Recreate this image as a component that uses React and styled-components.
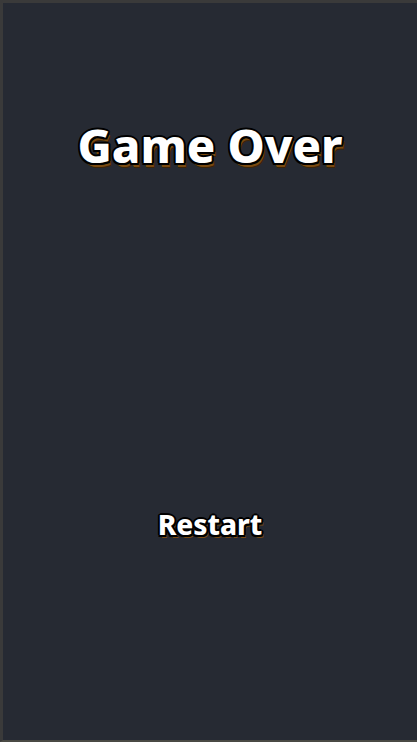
import React from 'react';
import styled, { createGlobalStyle } from 'styled-components';

const GlobalStyle = createGlobalStyle`
  html, body {
    margin: 0;
    padding: 0;
    background: #262a33;
    overflow: hidden;
  }
`;

const Screen = styled.div`
  box-sizing: border-box;
  width: 100%;
  height: 742px;
  background: #262a33;
  border-left: 3px solid #3a3a3a;
  border-top: 3px solid #3a3a3a;
  border-bottom: 2px solid #4a4a44;
  display: flex;
  flex-direction: column;
  align-items: center;
  font-family: 'Noto Sans', 'DejaVu Sans', sans-serif;
  color: #fff;
`;

const outline = `
  -1.5px -1.5px 0 #000, 1.5px -1.5px 0 #000, -1.5px 1.5px 0 #000, 1.5px 1.5px 0 #000,
  0 -2px 0 #000, 0 2px 0 #000, -2px 0 0 #000, 2px 0 0 #000
`;

const Title = styled.h1`
  margin: 114px 0 0;
  font-size: ${(p) => p.size}px;
  font-weight: 800;
  letter-spacing: 0;
  line-height: 1.2;
  text-shadow: ${outline}, 2px 4px 0 #7a4a10, 3px 5px 0 #3a2408;
`;

const RestartButton = styled.button`
  margin-top: 335px;
  background: transparent;
  border: none;
  padding: 0;
  cursor: pointer;
  color: #fff;
  font-family: inherit;
  font-size: 28px;
  font-weight: 800;
  line-height: 1.2;
  text-shadow: ${outline}, 2px 3px 0 #7a4a10;
`;

export default function App() {
  return (
    <>
      <GlobalStyle />
      <Screen>
        <Title size={47}>Game Over</Title>
        <RestartButton type="button">Restart</RestartButton>
      </Screen>
    </>
  );
}
